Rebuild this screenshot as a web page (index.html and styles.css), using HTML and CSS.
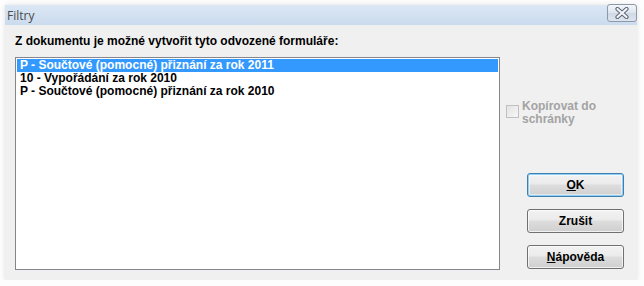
FILE: index.html
```html
<!DOCTYPE html>
<html lang="cs">
<head>
  <meta charset="UTF-8">
  <title>Filtry</title>
  <link rel="stylesheet" href="styles.css">
</head>
<body>
  <div class="dialog">
    <div class="titlebar">
      <span class="title">Filtry</span>
      <div class="close-btn">
        <svg width="14" height="12" viewBox="0 0 14 12">
          <path d="M2.5 2 L11.5 10 M11.5 2 L2.5 10" stroke="#5b6575" stroke-width="4.2" stroke-linecap="round"/>
          <path d="M2.5 2 L11.5 10 M11.5 2 L2.5 10" stroke="#f4f6f9" stroke-width="2.2" stroke-linecap="round"/>
        </svg>
      </div>
    </div>
    <div class="content">
      <div class="left">
        <div class="label">Z dokumentu je možné vytvořit tyto odvozené formuláře:</div>
        <ul class="listbox">
          <li class="selected">P - Součtové (pomocné) přiznání za rok 2011</li>
          <li>10 - Vypořádání za rok 2010</li>
          <li>P - Součtové (pomocné) přiznání za rok 2010</li>
        </ul>
      </div>
      <div class="right">
        <label class="check disabled">
          <span class="box"></span>
          <span class="check-text">Kopírovat do<br>schránky</span>
        </label>
        <div class="buttons">
          <button class="btn default"><u>O</u>K</button>
          <button class="btn">Zrušit</button>
          <button class="btn"><u>N</u>ápověda</button>
        </div>
      </div>
    </div>
  </div>
</body>
</html>
```

FILE: styles.css
```css
body {
  margin: 0;
  background: #fdfdfd;
  font-family: "Liberation Sans", Arial, sans-serif;
  font-size: 12px;
}
.dialog {
  margin: 5px 0 0 5px;
  width: 632px;
  height: 275px;
  background: #f0f0f0;
  box-shadow: 0 0 5px rgba(0, 0, 0, 0.12);
}
.titlebar {
  position: relative;
  height: 20px;
  background: linear-gradient(#dbe7f4, #cbdbee);
  display: flex;
  align-items: center;
}
.title {
  margin-left: 2px;
  font-family: "Open Sans", "DejaVu Sans", sans-serif;
  font-size: 12px;
  color: #4a4a4a;
}
.close-btn {
  position: absolute;
  right: 0;
  top: -1px;
  width: 28px;
  height: 16px;
  border: 1px solid #8d99a8;
  border-radius: 3px;
  background: linear-gradient(#f3f6fa, #dce4ee 50%, #cfd9e5 51%, #dde5ef);
  display: flex;
  align-items: center;
  justify-content: center;
}
.content {
  display: flex;
  padding: 9px 0 0 10px;
}
.left {
  width: 485px;
}
.label {
  font-weight: bold;
  line-height: 14px;
  height: 14px;
  color: #000;
}
.listbox {
  list-style: none;
  margin: 9px 0 0;
  padding: 1px;
  height: 209px;
  background: #fff;
  border: 1px solid #85858e;
}
.listbox li {
  font-weight: bold;
  line-height: 13px;
  height: 13px;
  padding-left: 3px;
  color: #000;
}
.listbox li.selected {
  background: #3399ff;
  color: #fff;
}
.right {
  margin-left: 6px;
  display: flex;
  flex-direction: column;
}
.check {
  display: flex;
  margin-top: 66px;
  font-weight: bold;
  line-height: 13px;
}
.check.disabled {
  color: #a3a3a3;
}
.box {
  width: 11px;
  height: 11px;
  margin-top: 5px;
  margin-right: 3px;
  border: 1px solid #c0c0c0;
  background: linear-gradient(135deg, #e4e4e4, #f6f6f6);
  flex: none;
}
.buttons {
  display: flex;
  flex-direction: column;
  gap: 12px;
  margin-top: 47px;
  margin-left: 21px;
}
.btn {
  width: 97px;
  height: 24px;
  padding: 0;
  font-family: "Liberation Sans", Arial, sans-serif;
  font-size: 12px;
  font-weight: bold;
  color: #000;
  border: 1px solid #707070;
  border-radius: 3px;
  background: linear-gradient(#f2f2f2, #ebebeb 45%, #dddddd 50%, #cfcfcf);
  box-shadow: inset 0 0 0 1px rgba(255, 255, 255, 0.7);
}
.btn.default {
  border-color: #3c7fb1;
  box-shadow: inset 0 0 0 1px #8fd0f4, inset 0 0 0 2px rgba(255, 255, 255, 0.5);
}
.btn u {
  text-decoration-thickness: 1px;
  text-underline-offset: 1px;
}
```
